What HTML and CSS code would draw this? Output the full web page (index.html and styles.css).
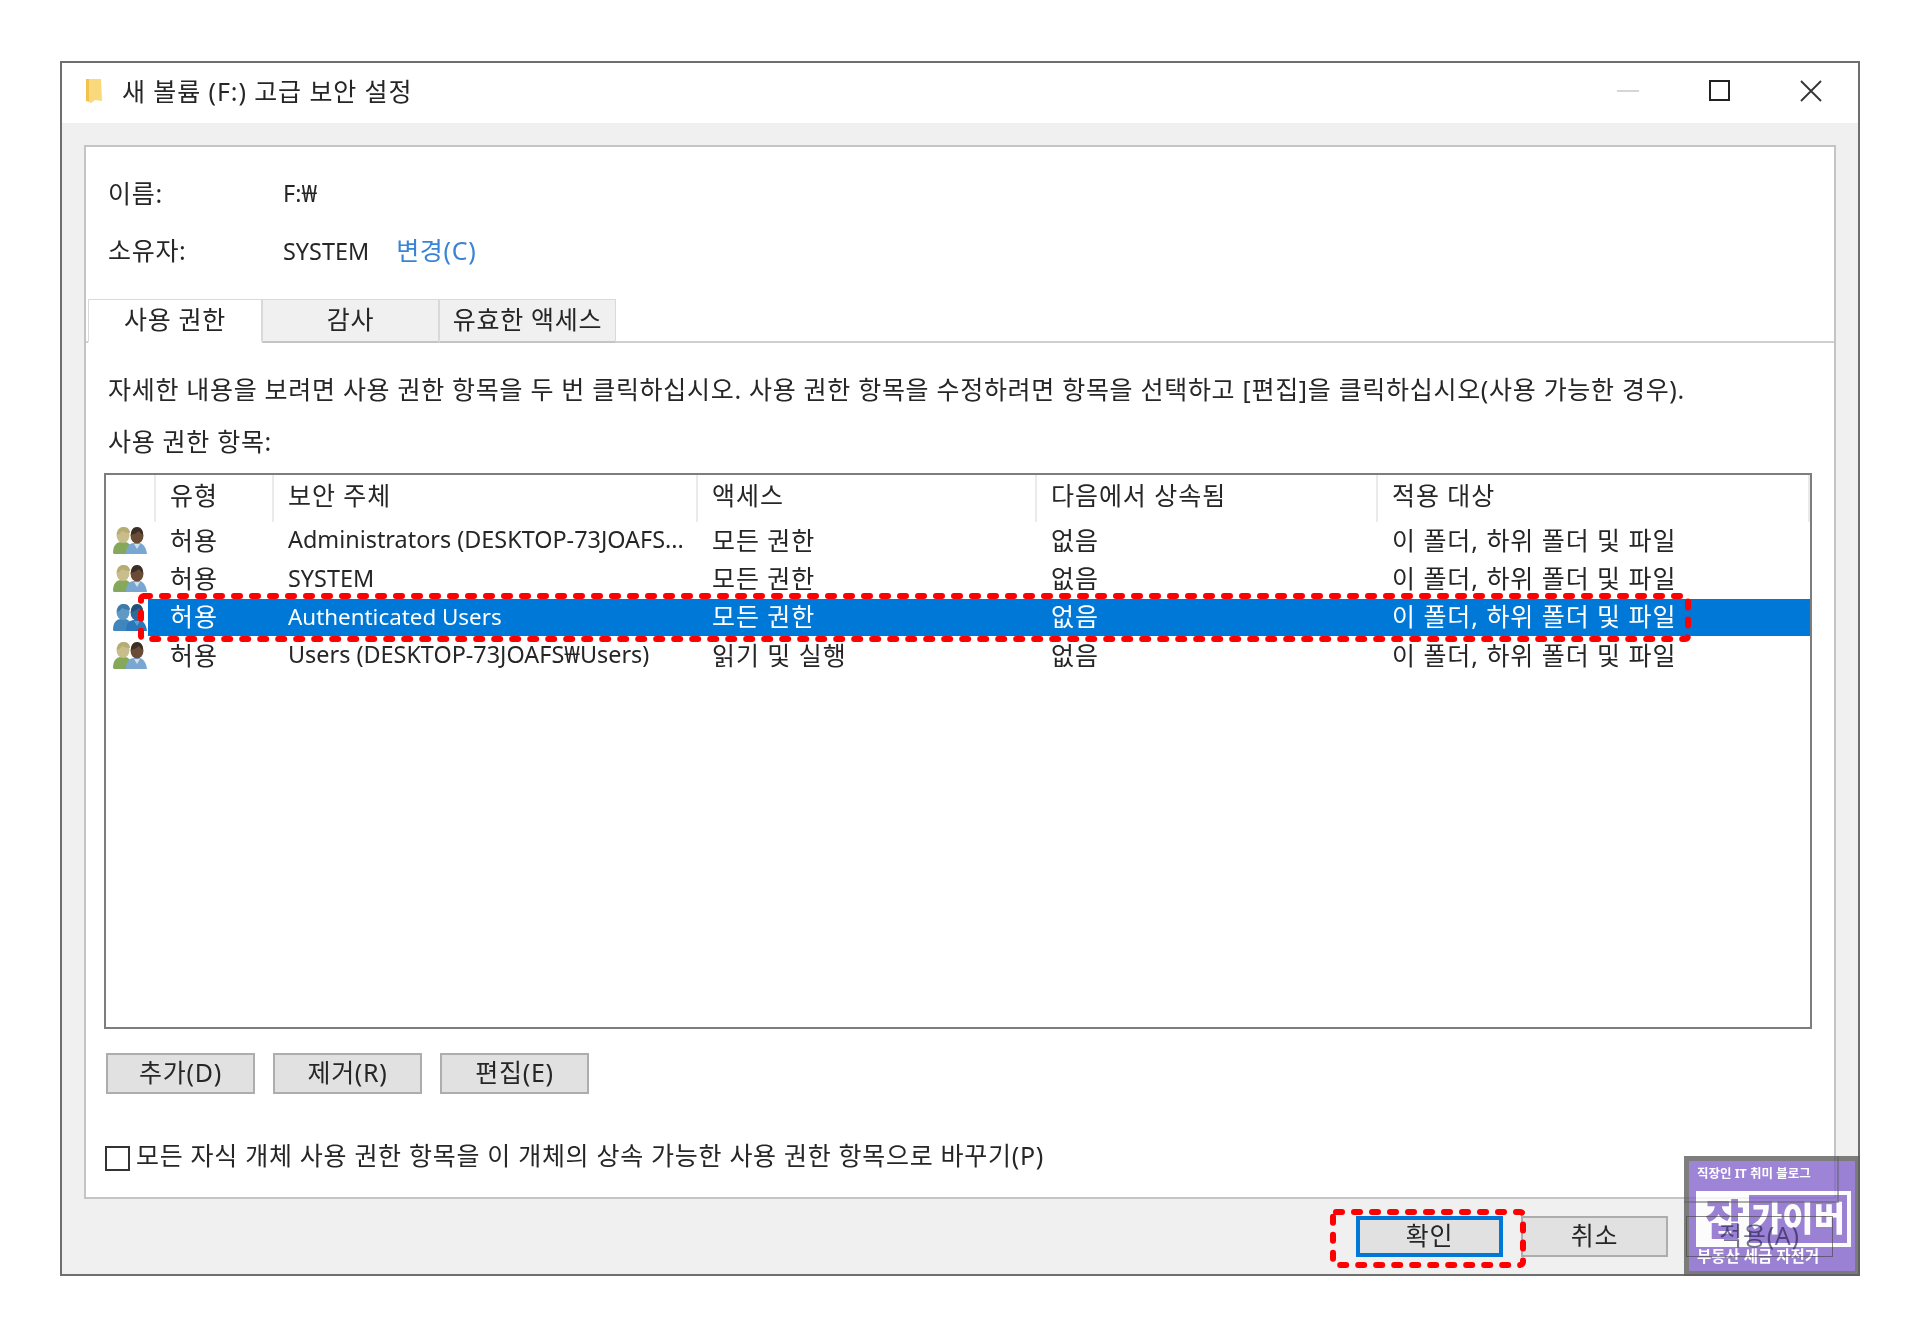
FILE: index.html
```html
<!DOCTYPE html>
<html lang="ko">
<head>
<meta charset="utf-8">
<title>새 볼륨 (F:) 고급 보안 설정</title>
<link rel="stylesheet" href="styles.css">
</head>
<body>
<svg class="defs" width="0" height="0" aria-hidden="true">
  <symbol id="users" viewBox="0 0 34 28">
    <path d="M0 26c0-7 3-11 8-11h4c3 0 6 3 7 7v5H1z" fill="var(--body-a)"/>
    <ellipse cx="10" cy="8" rx="6.500" ry="8" fill="var(--head-a)"/>
    <path d="M4 8c0-5 3-8 7-8s6 3 6 6c-3 0-6-1-8-2-1 2-3 3-5 4z" fill="var(--hair-a)"/>
    <path d="M13 27c0-7 3-11 8-11h5c4 0 7 4 8 11z" fill="var(--body-b)"/>
    <ellipse cx="24" cy="8.500" rx="6.500" ry="8" fill="var(--head-b)"/>
    <path d="M18 8c0-5 2-8 6-8s6 3 6 8c-2-1-3-3-4-4-2 2-5 3-8 4z" fill="var(--hair-b)"/>
    <path d="M21 17l3 5 3-5z" fill="var(--shirt)"/>
  </symbol>
</svg>
<div class="page">
  <div class="window">
    <header class="titlebar">
      <svg class="folder" viewBox="0 0 18 26"><path d="M1 1h15l1 22-7-1-4 3-5-2z" fill="#f9d97c"/><path d="M1 1h3v22H1z" fill="#f2c14e"/></svg>
      <span class="title">새 볼륨 (F:) 고급 보안 설정</span>
      <div class="controls">
        <svg class="ctl" viewBox="0 0 22 22"><path d="M0 11h22" stroke="#c9c9c9" stroke-width="1.500"/></svg>
        <svg class="ctl" viewBox="0 0 22 22"><rect x="2" y="1" width="19" height="19" fill="none" stroke="#222" stroke-width="2"/></svg>
        <svg class="ctl" viewBox="0 0 22 22"><path d="M1 1l20 20M21 1L1 21" fill="none" stroke="#333" stroke-width="1.800"/></svg>
      </div>
    </header>
    <main class="panel">
      <div class="info">
        <span>이름:</span><span class="value latin">F:₩</span>
        <span>소유자:</span><span class="value"><span class="latin">SYSTEM</span><a class="link">변경(C)</a></span>
      </div>
      <nav class="tabs">
        <div class="tab active">사용 권한</div>
        <div class="tab">감사</div>
        <div class="tab">유효한 액세스</div>
      </nav>
      <p class="desc">자세한 내용을 보려면 사용 권한 항목을 두 번 클릭하십시오. 사용 권한 항목을 수정하려면 항목을 선택하고 [편집]을 클릭하십시오(사용 가능한 경우).</p>
      <p class="label">사용 권한 항목:</p>
      <div class="list">
        <div class="row head">
          <div class="cell"></div><div class="cell">유형</div><div class="cell">보안 주체</div><div class="cell">액세스</div><div class="cell">다음에서 상속됨</div><div class="cell">적용 대상</div>
        </div>
        <div class="row">
          <div class="cell ic"><svg class="users"><use href="#users"/></svg></div><div class="cell">허용</div><div class="cell latin">Administrators (DESKTOP-73JOAFS...</div><div class="cell">모든 권한</div><div class="cell">없음</div><div class="cell">이 폴더, 하위 폴더 및 파일</div>
        </div>
        <div class="row">
          <div class="cell ic"><svg class="users"><use href="#users"/></svg></div><div class="cell">허용</div><div class="cell latin">SYSTEM</div><div class="cell">모든 권한</div><div class="cell">없음</div><div class="cell">이 폴더, 하위 폴더 및 파일</div>
        </div>
        <div class="row selected">
          <div class="cell ic"><svg class="users"><use href="#users"/></svg></div><div class="cell">허용</div><div class="cell latin narrow">Authenticated Users</div><div class="cell">모든 권한</div><div class="cell">없음</div><div class="cell">이 폴더, 하위 폴더 및 파일</div>
          <svg class="mark mark-row" viewBox="0 0 1553 49"><rect x="3" y="3" width="1547" height="43" rx="3" fill="none" stroke="#f00" stroke-width="6" stroke-dasharray="6 12" stroke-linecap="round"/></svg>
        </div>
        <div class="row">
          <div class="cell ic"><svg class="users"><use href="#users"/></svg></div><div class="cell">허용</div><div class="cell latin">Users (DESKTOP-73JOAFS₩Users)</div><div class="cell">읽기 및 실행</div><div class="cell">없음</div><div class="cell">이 폴더, 하위 폴더 및 파일</div>
        </div>
      </div>
      <div class="actions">
        <button class="btn">추가(D)</button>
        <button class="btn">제거(R)</button>
        <button class="btn">편집(E)</button>
      </div>
      <label class="check"><span class="box"></span><span class="check-text">모든 자식 개체 사용 권한 항목을 이 개체의 상속 가능한 사용 권한 항목으로 바꾸기(P)</span></label>
    </main>
    <footer class="footer">
      <button class="btn foot primary">확인
        <svg class="mark mark-ok" viewBox="0 0 196 59"><rect x="3" y="3" width="190" height="53" rx="3" fill="none" stroke="#f00" stroke-width="6" stroke-dasharray="6 12" stroke-linecap="round"/></svg>
      </button>
      <button class="btn foot">취소</button>
      <button class="btn foot apply">적용(A)</button>
    </footer>
    <aside class="badge">
      <div class="badge-top">직장인 IT 취미 블로그</div>
      <div class="badge-logo">
        <span class="logo-a">잡</span>
        <span class="logo-b">가이버</span>
      </div>
      <div class="badge-bottom">부동산 세금 자전거</div>
    </aside>
  </div>
</div>
</body>
</html>
```
FILE: styles.css
```css
* { box-sizing: border-box; }
html, body { margin: 0; padding: 0; background: #fff; }
body {
  font-family: "Noto Sans", "Noto Sans CJK KR", sans-serif;
  font-size: 25px;
  letter-spacing: .7px;
  color: #262626;
}
.defs { position: absolute; }
.page { padding: 61px 0 0 60px; }
.window {
  position: relative;
  width: 1800px;
  height: 1215px;
  border: 2px solid #6e6e6e;
  background: #f0f0f0;
  display: flex;
  flex-direction: column;
  filter: blur(.4px);
}
.titlebar {
  height: 60px;
  background: #fff;
  display: flex;
  align-items: center;
  padding-left: 23px;
  flex: none;
}
.folder { width: 18px; height: 26px; margin-bottom: 4px; }
.title { margin: 0 0 6px 19px; letter-spacing: .9px; }
.controls {
  margin: 0 0 4px auto;
  display: flex;
  gap: 70px;
  padding-right: 36px;
  align-items: center;
}
.ctl { width: 22px; height: 22px; display: block; }
.ctl:first-child { margin-right: -1px; }
.panel {
  margin: 22px 22px 0;
  height: 1054px;
  flex: none;
  background: #fff;
  border: 2px solid #c4c4c4;
  display: flex;
  flex-direction: column;
}
.info {
  display: grid;
  grid-template-columns: 175px 1fr;
  grid-auto-rows: 32px;
  row-gap: 25px;
  line-height: 32px;
  padding: 30px 0 0 22px;
}
.link { color: #3a84d6; margin-left: 27px; }
.tabs {
  margin-top: 33px;
  height: 44px;
  display: flex;
  border-bottom: 2px solid #d0d0d0;
  padding-left: 2px;
}
.tab {
  width: 177px;
  height: 44px;
  background: #f0f0f0;
  border: 1px solid #d9d9d9;
  border-bottom: 2px solid #c4c4c4;
  display: flex;
  align-items: center;
  justify-content: center;
  line-height: 1;
  white-space: nowrap;
  padding-bottom: 2px;
}
.tab.active {
  width: 174px;
  background: #fff;
  border-bottom-color: #fff;
}
.desc, .label {
  margin: 0;
  line-height: 32px;
  padding-left: 22px;
  white-space: nowrap;
}
.desc { margin-top: 30px; }
.label { margin-top: 20px; }
.list {
  margin: 16px 22px 0 18px;
  height: 556px;
  flex: none;
  border: 2px solid #7d7d7d;
  background: #fff;
}
.row {
  position: relative;
  display: grid;
  grid-template-columns: 50px 118px 424px 339px 341px 1fr;
  height: 38.33px;
  align-items: center;
  line-height: 1;
  letter-spacing: .95px;
  white-space: nowrap;
}
.row.head {
  height: 47px;
  align-items: stretch;
}
.head .cell {
  border-right: 2px solid #eaeaea;
  display: flex;
  align-items: center;
  padding-bottom: 6px;
}
.cell { padding-left: 14px; padding-bottom: 2px; }
.cell.ic { padding: 0 0 0 7px; display: flex; align-items: center; }
.latin, .row .latin { font-size: 23.4px; letter-spacing: 0; }
.row .latin.narrow { font-size: 22.400px; }
.users {
  width: 34px;
  height: 28px;
  display: block;
  --body-a: #86a85a; --head-a: #c9bd8c; --hair-a: #b5ad72;
  --body-b: #7aa7d2; --head-b: #6a4c36; --hair-b: #3a2e26; --shirt: #cfe0ee;
}
.selected .users {
  --body-a: #3f86bd; --head-a: #5f9ac4; --hair-a: #3d7ba8;
  --body-b: #2a78bc; --head-b: #2f6a9a; --hair-b: #20507c; --shirt: #5ea0cf;
}
.row.selected {
  color: #fff;
  background: linear-gradient(#0078d7, #0078d7) no-repeat 42px 0 / 100% 37px;
}
.mark { position: absolute; display: block; pointer-events: none; }
.mark-row { left: 32px; top: -6px; width: 1553px; height: 49px; }
.mark-ok { left: -30px; top: -11px; width: 196px; height: 59px; }
.actions {
  margin: 24px 0 0 20px;
  display: flex;
  gap: 18px;
}
.btn {
  font: inherit;
  letter-spacing: inherit;
  color: inherit;
  width: 149px;
  height: 41px;
  padding: 0 0 3px;
  background: #e1e1e1;
  border: 2px solid #adadad;
  line-height: 1;
}
.check {
  margin: 48px 0 0 19px;
  display: flex;
  align-items: center;
  gap: 6px;
  white-space: nowrap;
  line-height: 26px;
}
.check-text { margin-bottom: 6px; }
.box {
  width: 25px;
  height: 25px;
  background: #fff;
  border: 2px solid #333;
  flex: none;
}
.footer {
  margin-top: 17px;
  padding-right: 25px;
  display: flex;
  justify-content: flex-end;
  gap: 18px;
}
.foot { width: 147px; }
.btn.primary {
  position: relative;
  border: 4px solid #0078d7;
}
.btn.apply {
  position: relative;
  z-index: 2;
  background: transparent;
  border: 1px solid rgba(70, 70, 70, .65);
  color: rgba(25, 25, 70, .6);
}
.badge {
  position: absolute;
  z-index: 1;
  right: -2px;
  bottom: -2px;
  width: 176px;
  height: 120px;
  background: #8666cc;
  border: 5px solid #5f5f5f;
  opacity: .8;
  color: #fff;
  font-weight: 700;
  letter-spacing: 0;
  display: flex;
  flex-direction: column;
  white-space: nowrap;
}
.badge::before {
  content: "";
  position: absolute;
  left: -5px;
  top: -5px;
  width: 153px;
  height: 45px;
  border-right: 2px solid rgba(60, 60, 60, .5);
  border-bottom: 2px solid rgba(60, 60, 60, .5);
}
.badge-top {
  font-size: 12.500px;
  line-height: 14px;
  margin: 6px 0 0 8px;
}
.badge-logo {
  margin: 10px 4px 0 7px;
  height: 56px;
  background: #fff;
  padding: 4px;
  display: flex;
  align-items: stretch;
}
.logo-a {
  width: 49px;
  color: #8666cc;
  font-size: 42px;
  font-weight: 900;
  line-height: 48px;
  text-align: center;
}
.logo-b {
  flex: 1;
  background: #8666cc;
  font-size: 34px;
  font-weight: 900;
  line-height: 46px;
  text-align: center;
}
.badge-bottom {
  font-size: 15.500px;
  line-height: 16px;
  margin: 1px 0 0 8px;
}
```
